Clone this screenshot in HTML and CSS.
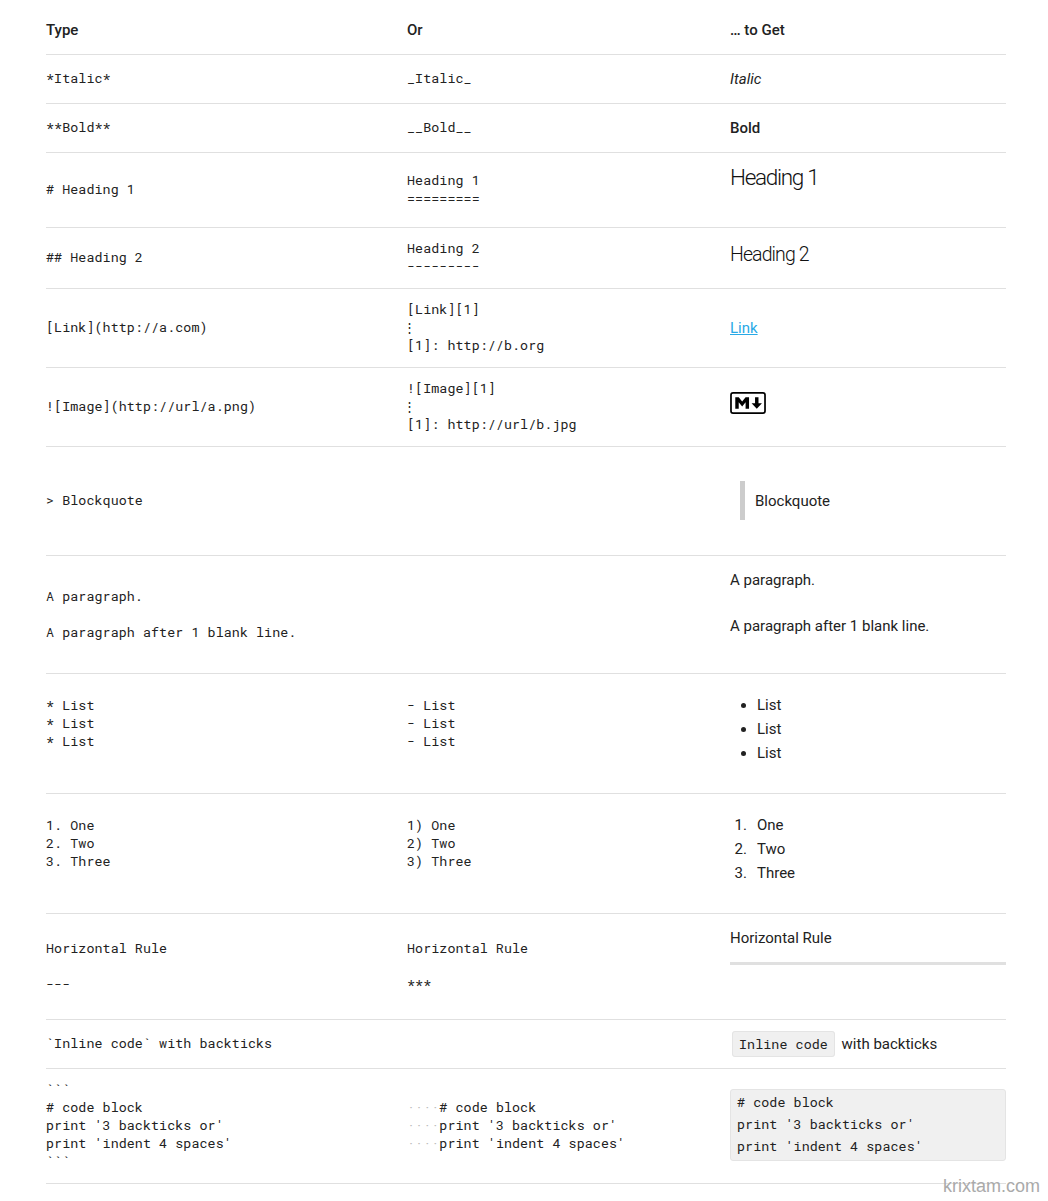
FILE: index.html
```html
<!DOCTYPE html>
<html lang="en">
<head>
<meta charset="utf-8">
<title>Markdown Reference</title>
<link rel="stylesheet" href="styles.css">
</head>
<body>
<table class="ref">
<colgroup><col class="c1"><col class="c2"><col class="c3"></colgroup>
<thead>
<tr><th>Type</th><th>Or</th><th>… to Get</th></tr>
</thead>
<tbody>
<tr><td><pre>*Italic*</pre></td><td><pre>_Italic_</pre></td><td><em>Italic</em></td></tr>
<tr><td><pre>**Bold**</pre></td><td><pre>__Bold__</pre></td><td><strong>Bold</strong></td></tr>
<tr><td><pre># Heading 1</pre></td><td><pre>Heading 1
=========</pre></td><td><h1>Heading 1</h1></td></tr>
<tr><td><pre>## Heading 2</pre></td><td><pre>Heading 2
---------</pre></td><td><h2>Heading 2</h2></td></tr>
<tr><td><pre>[Link](http://a.com)</pre></td><td><pre>[Link][1]
<span class="vdots">⋮</span>
[1]: http://b.org</pre></td><td><a href="#">Link</a></td></tr>
<tr><td><pre>![Image](http://url/a.png)</pre></td><td><pre>![Image][1]
<span class="vdots">⋮</span>
[1]: http://url/b.jpg</pre></td><td><svg class="mdmark" viewBox="0 0 208 128" aria-label="Markdown"><rect x="5" y="5" width="198" height="118" rx="12" fill="none" stroke="#000" stroke-width="10"/><path d="M30 98V30h20l20 25 20-25h20v68H90V59L70 84 50 59v39zm125 0l-30-33h20V30h20v35h20z"/></svg></td></tr>
<tr><td><pre>&gt; Blockquote</pre></td><td></td><td><blockquote>Blockquote</blockquote></td></tr>
<tr><td><pre>A paragraph.

A paragraph after 1 blank line.</pre></td><td></td><td><p>A paragraph.</p><p>A paragraph after 1 blank line.</p></td></tr>
<tr><td><pre class="trail">* List
* List
* List
&#10;</pre></td><td><pre class="trail">- List
- List
- List
&#10;</pre></td><td><ul><li>List</li><li>List</li><li>List</li></ul></td></tr>
<tr><td><pre class="trail">1. One
2. Two
3. Three
&#10;</pre></td><td><pre class="trail">1) One
2) Two
3) Three
&#10;</pre></td><td><ol><li>One</li><li>Two</li><li>Three</li></ol></td></tr>
<tr><td><pre>Horizontal Rule

---</pre></td><td><pre>Horizontal Rule

***</pre></td><td><p class="tight">Horizontal Rule</p><hr></td></tr>
<tr><td><pre>`Inline code` with backticks</pre></td><td></td><td><code>Inline code</code> with backticks</td></tr>
<tr><td><pre>```
# code block
print '3 backticks or'
print 'indent 4 spaces'
```</pre></td><td><pre><span class="ws">····</span># code block
<span class="ws">····</span>print '3 backticks or'
<span class="ws">····</span>print 'indent 4 spaces'</pre></td><td><pre class="block"># code block
print '3 backticks or'
print 'indent 4 spaces'</pre></td></tr>
</tbody>
</table>
<div class="watermark">krixtam.com</div>
</body>
</html>
```
FILE: styles.css
```css
html, body { margin: 0; padding: 0; background: #fff; }
body {
  padding: 6px 42px 0 46px;
  font-family: Roboto, "Liberation Sans", sans-serif;
  font-size: 15px;
  line-height: 24px;
  color: #222;
  height: 1195px;
  overflow: hidden;
  position: relative;
}
.ref { width: 960px; table-layout: fixed; border-collapse: separate; border-spacing: 0; }
.c1 { width: 361px; }
.c2 { width: 323px; }
.c3 { width: 276px; }
th, td { padding: 12px 0; border-bottom: 1px solid #e0e0e0; text-align: left; vertical-align: middle; }
th { font-weight: 500; }
strong { font-weight: 500; }
pre {
  margin: -1px 0 1px;
  font-family: "Roboto Mono", "DejaVu Sans Mono", monospace;
  font-size: 13.33px;
  line-height: 18px;
  letter-spacing: 0.08px;
  color: #222;
}
pre.trail { margin: -2px 0 2px; }
.ws { color: #bbb; }
.vdots { margin-left: -4px; }
h1 { margin: 0 0 26px; font-size: 22.5px; font-weight: 350; line-height: 24px; letter-spacing: -1.3px; color: #111; }
h2 { margin: 0 0 6px; font-size: 19.5px; font-weight: 350; line-height: 30px; letter-spacing: -0.9px; color: #111; }
a { color: #29a9e6; }
.mdmark { display: block; width: 36px; height: 22px; margin: 12px 0 20px; }
blockquote { margin: 22px 10px 23px; padding: 8px 10px 7px; border-left: 5px solid #ccc; }
p { margin: 0 0 22px; }
p + p { margin-bottom: 23px; }
p.tight { margin: 0; }
hr { margin: 12px 0 42px; height: 3px; background: #e0e0e0; border: 0; }
ul, ol { margin: 7px 0 16px; padding-left: 27px; }
ol li::marker { content: counter(list-item) ".\00a0\00a0\2006"; }
code {
  margin-left: 2px;
  margin-right: 3px;
  padding: 3px 6px;
  font-family: "Roboto Mono", "DejaVu Sans Mono", monospace;
  font-size: 13.33px;
  letter-spacing: 0.08px;
  background: #f0f0f0;
  border: 1px solid #e4e4e4;
  border-radius: 3px;
}
pre.block {
  margin: 8px 0 10px;
  padding: 1px 6px 3px;
  line-height: 22px;
  background: #f0f0f0;
  border: 1px solid #e4e4e4;
  border-radius: 3px;
}
.watermark {
  position: absolute;
  left: 943px;
  top: 1174px;
  font-family: "Liberation Sans", Arial, sans-serif;
  font-size: 18px;
  color: #aaa;
}
```
